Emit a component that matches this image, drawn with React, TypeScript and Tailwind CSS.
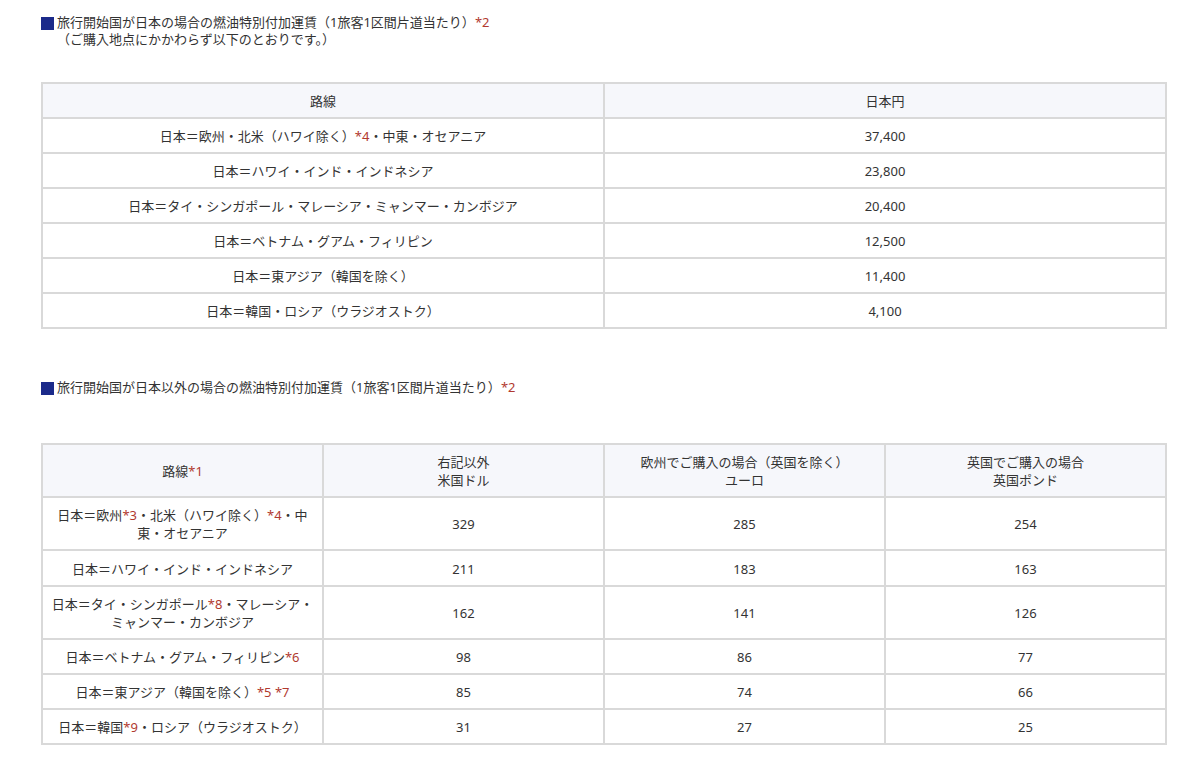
import React from 'react';

// red footnote marker
const Note = ({ n }: { n: string }) => <span className="text-[#b13a2f]">*{n}</span>;

const SectionTitle = ({ children, sub }: { children: React.ReactNode; sub?: string }) => (
  <div className="flex items-start text-[13px] leading-[17px] text-[#333]">
    <span className="mt-[3px] mr-[3px] h-[13px] w-[13px] shrink-0 bg-[#1b2a8a]" />
    <div>
      <div>{children}</div>
      {sub && <div>{sub}</div>}
    </div>
  </div>
);

const th = 'border-2 border-[#d9d9d9] bg-[#f6f7fb] px-2 pt-2 pb-[7px] font-normal text-center align-middle';
const td = 'border-2 border-[#d9d9d9] px-2 pt-2 pb-[7px] text-center align-middle whitespace-nowrap';

const domestic: [React.ReactNode, string][] = [
  [<>日本＝欧州・北米（ハワイ除く）<Note n="4" />・中東・オセアニア</>, '37,400'],
  ['日本＝ハワイ・インド・インドネシア', '23,800'],
  ['日本＝タイ・シンガポール・マレーシア・ミャンマー・カンボジア', '20,400'],
  ['日本＝ベトナム・グアム・フィリピン', '12,500'],
  ['日本＝東アジア（韓国を除く）', '11,400'],
  ['日本＝韓国・ロシア（ウラジオストク）', '4,100'],
];

const overseas: [React.ReactNode, string, string, string][] = [
  [<>日本＝欧州<Note n="3" />・北米（ハワイ除く）<Note n="4" />・中<br />東・オセアニア</>, '329', '285', '254'],
  ['日本＝ハワイ・インド・インドネシア', '211', '183', '163'],
  [<>日本＝タイ・シンガポール<Note n="8" />・マレーシア・<br />ミャンマー・カンボジア</>, '162', '141', '126'],
  [<>日本＝ベトナム・グアム・フィリピン<Note n="6" /></>, '98', '86', '77'],
  [<>日本＝東アジア（韓国を除く）<Note n="5" /> <Note n="7" /></>, '85', '74', '66'],
  [<>日本＝韓国<Note n="9" />・ロシア（ウラジオストク）</>, '31', '27', '25'],
];

export default function App() {
  return (
    <div
      className="min-h-[764px] bg-white pt-[14px] pl-[41px] text-[#333]"
      style={{ fontFamily: '"Noto Sans", "Noto Sans CJK JP", sans-serif' }}
    >
      <div className="w-[1126px]">
        <SectionTitle sub="（ご購入地点にかかわらず以下のとおりです。）">
          旅行開始国が日本の場合の燃油特別付加運賃（1旅客1区間片道当たり）<Note n="2" />
        </SectionTitle>

        <table className="mt-[34px] w-full table-fixed border-collapse text-[13px] leading-[18px]">
          <thead>
            <tr>
              <th className={th}>路線</th>
              <th className={th}>日本円</th>
            </tr>
          </thead>
          <tbody>
            {domestic.map(([route, yen], i) => (
              <tr key={i}>
                <td className={td}>{route}</td>
                <td className={td}>{yen}</td>
              </tr>
            ))}
          </tbody>
        </table>

        <div className="mt-[50px]">
          <SectionTitle>
            旅行開始国が日本以外の場合の燃油特別付加運賃（1旅客1区間片道当たり）<Note n="2" />
          </SectionTitle>
        </div>

        <table className="mt-[47px] w-full table-fixed border-collapse text-[13px] leading-[18px]">
          <thead>
            <tr>
              <th className={th}>
                路線<Note n="1" />
              </th>
              <th className={th}>
                右記以外
                <br />
                米国ドル
              </th>
              <th className={th}>
                欧州でご購入の場合（英国を除く）
                <br />
                ユーロ
              </th>
              <th className={th}>
                英国でご購入の場合
                <br />
                英国ポンド
              </th>
            </tr>
          </thead>
          <tbody>
            {overseas.map(([route, usd, eur, gbp], i) => (
              <tr key={i}>
                <td className={`${td} ${i === 1 ? 'h-[36px]' : ''}`}>{route}</td>
                <td className={td}>{usd}</td>
                <td className={td}>{eur}</td>
                <td className={td}>{gbp}</td>
              </tr>
            ))}
          </tbody>
        </table>
      </div>
    </div>
  );
}
